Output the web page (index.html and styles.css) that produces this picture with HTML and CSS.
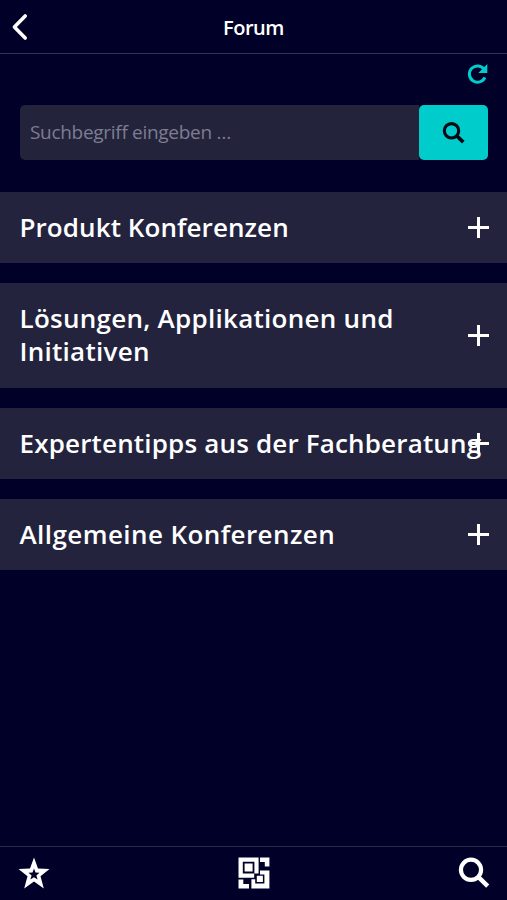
FILE: index.html
```html
<!DOCTYPE html>
<html lang="de">
<head>
<meta charset="utf-8">
<title>Forum</title>
<link rel="stylesheet" href="styles.css">
</head>
<body>
<header class="header">
  <button class="back" aria-label="Zurück"><svg width="18" height="28" viewBox="0 0 18 28"><path d="M15.2 3 4.4 14 15.2 25" fill="none" stroke="#fff" stroke-width="3.6" stroke-linecap="round" stroke-linejoin="round"/></svg></button>
  <h1 class="title">Forum</h1>
</header>
<main class="content">
  <div class="toolbar">
    <svg width="22" height="22" viewBox="0 0 22 22"><path d="M17.2 6.5A8.1 8.1 0 1 0 17.9 14.3" fill="none" stroke="#00cccc" stroke-width="3"/><path d="M20.3 1V10H11.3Z" fill="#00cccc"/></svg>
  </div>
  <form class="search">
    <input class="search-input" type="text" placeholder="Suchbegriff eingeben …">
    <button class="search-button" type="button" aria-label="Suchen"><svg width="24" height="24" viewBox="0 0 24 24"><circle cx="9.5" cy="9.8" r="7.2" fill="none" stroke="#000814" stroke-width="3.1"/><path d="m14.3 14.5 7 6.7" stroke="#000814" stroke-width="3.7"/></svg></button>
  </form>
  <section class="panels">
    <div class="panel"><h2 class="label produkt">Produkt Konferenzen</h2><i class="plus"></i></div>
    <div class="panel tall"><h2 class="label loesungen">Lösungen, Applikationen und<br>Initiativen</h2><i class="plus"></i></div>
    <div class="panel"><h2 class="label experten">Expertentipps aus der Fachberatung</h2><i class="plus"></i></div>
    <div class="panel"><h2 class="label allgemein">Allgemeine Konferenzen</h2><i class="plus"></i></div>
  </section>
</main>
<footer class="footer">
  <svg width="32" height="32" viewBox="0 0 32 32"><path fill="#fff" fill-rule="evenodd" d="M16 .5 20 11.6 31.5 12 22.5 19.2 25.8 31.5 16 24.6 6.2 31.5 9.5 19.2.5 12 12 11.6ZM16 11.4 14.5 15.6 10.5 15.8 13.6 18.4 12.4 22.4 16 20.2 19.6 22.4 18.4 18.4 21.5 15.8 17.5 15.6Z"/></svg>
  <svg width="32" height="32" viewBox="0 0 32 32"><path fill="#fff" fill-rule="evenodd" d="M.5.5H20.6V16.5H16.2V20.8H.5ZM4.8 4.8V16.4H16.4V4.8ZM6.6 6.6H14.6V14.6H6.6ZM22 .5H31.4V9.6H26.8V5H22ZM22 13.4H31.4V31.5H13.4V22.2H17.2V26.4H26.4V17.4H22ZM18.8 18.8H24.9V24.9H18.8ZM.5 22.4H5.3V27H11V31.5H.5Z"/></svg>
  <svg width="32" height="32" viewBox="0 0 32 32"><circle cx="13" cy="12.8" r="10.1" fill="none" stroke="#fff" stroke-width="4.2"/><path d="m20 19.7 9.7 9.4" stroke="#fff" stroke-width="4.4"/></svg>
</footer>
</body>
</html>
```
FILE: styles.css
```css
* { box-sizing: border-box; }
body {
  margin: 0;
  height: 900px;
  display: flex;
  flex-direction: column;
  overflow: hidden;
  background: #000028;
  color: #fff;
  font-family: "Open Sans", "Noto Sans", sans-serif;
}
button { border: 0; padding: 0; background: none; }
.header {
  height: 54px;
  display: grid;
  grid-template-columns: 40px 1fr 40px;
  align-items: center;
  border-bottom: 1px solid #34344f;
}
.back { display: flex; padding-left: 10px; }
.title {
  margin: 0;
  padding-top: 2px;
  text-align: center;
  font-size: 20px;
  font-weight: 600;
  line-height: 28px;
  letter-spacing: -0.5px;
}
.content { flex: 1; }
.toolbar {
  height: 51px;
  padding: 9px 18px 0 0;
  display: flex;
  justify-content: flex-end;
}
.search { display: flex; height: 55px; margin: 0 19px 0 20px; }
.search-input {
  flex: 1;
  min-width: 0;
  border: 0;
  border-radius: 5px 0 0 5px;
  padding: 0 10px 1px;
  background: #23233c;
  color: #fff;
  font: 19px "Open Sans", "Noto Sans", sans-serif;
  letter-spacing: -0.3px;
}
.search-input::placeholder { color: #7d7d92; opacity: 1; }
.search-button {
  width: 69px;
  border-radius: 5px;
  background: #00cccc;
  display: flex;
  align-items: center;
  justify-content: center;
}
.panels { margin-top: 32px; display: grid; gap: 20px; }
.panel {
  padding: 19px 19px 19px 19.5px;
  display: flex;
  align-items: center;
  justify-content: space-between;
  background: #23233e;
}
.panel.tall { padding-bottom: 20px; }
.label {
  margin: 0;
  width: 448px;
  white-space: nowrap;
  font-size: 26px;
  font-weight: 600;
  line-height: 33px;
}
.produkt { letter-spacing: 0.08px; }
.loesungen { letter-spacing: 0.27px; }
.experten { letter-spacing: 0.17px; }
.allgemein { letter-spacing: 0.42px; }
.plus {
  position: relative;
  width: 21px;
  height: 21px;
  flex: none;
  background: linear-gradient(#fff, #fff) center / 21px 3px no-repeat, linear-gradient(#fff, #fff) center / 3px 21px no-repeat;
}
.footer {
  height: 54px;
  padding: 10px 17px 0 18px;
  display: flex;
  justify-content: space-between;
  border-top: 1px solid #2b2b47;
}
```
